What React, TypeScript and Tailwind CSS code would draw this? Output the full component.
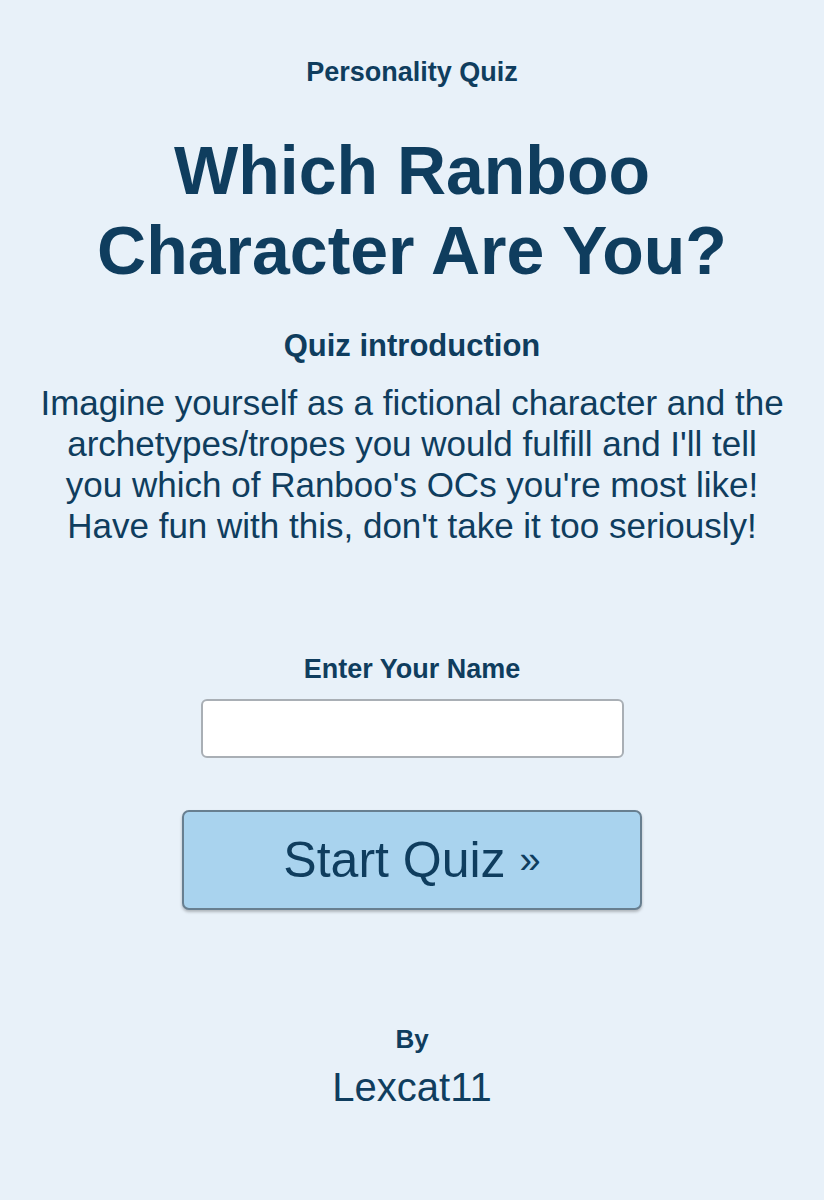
export default function App() {
  return (
    <div
      className="min-h-[1200px] w-full bg-[#e8f1f9] text-[#0f3d5e] flex flex-col items-center text-center"
      style={{ fontFamily: '"Liberation Sans", Arial, Helvetica, sans-serif' }}
    >
      <div className="pt-[57px] text-[27px] leading-[30px] font-bold">Personality Quiz</div>

      <h1 className="mt-[43px] text-[68px] leading-[80px] font-bold">
        Which Ranboo
        <br />
        Character Are You?
      </h1>

      <h2 className="mt-[39px] text-[31px] leading-[34px] font-bold">Quiz introduction</h2>

      <p className="mt-[19px] px-[10px] text-[35px] leading-[41px] whitespace-nowrap">
        Imagine yourself as a fictional character and the
        <br />
        archetypes/tropes you would fulfill and I'll tell
        <br />
        you which of Ranboo's OCs you're most like!
        <br />
        Have fun with this, don't take it too seriously!
      </p>

      <label htmlFor="name" className="mt-[108px] text-[27px] leading-[30px] font-bold">
        Enter Your Name
      </label>

      <input
        id="name"
        type="text"
        className="mt-[15px] w-[423px] h-[59px] bg-white border-2 border-[#a9afb5] rounded-[6px] outline-none px-3 text-[24px]"
      />

      <button className="mt-[52px] w-[460px] h-[100px] bg-[#a9d3ee] border-2 border-[#687f90] rounded-[7px] shadow-[0_2px_3px_rgba(0,0,0,0.25)] text-[50px] text-[#0f3d5e]">
        Start Quiz <span className="text-[38px] align-[4px]">»</span>
      </button>

      <div className="mt-[114px] text-[26px] leading-[30px] font-bold">By</div>
      <div className="mt-[10px] text-[40px] leading-[46px]">Lexcat11</div>
    </div>
  );
}
